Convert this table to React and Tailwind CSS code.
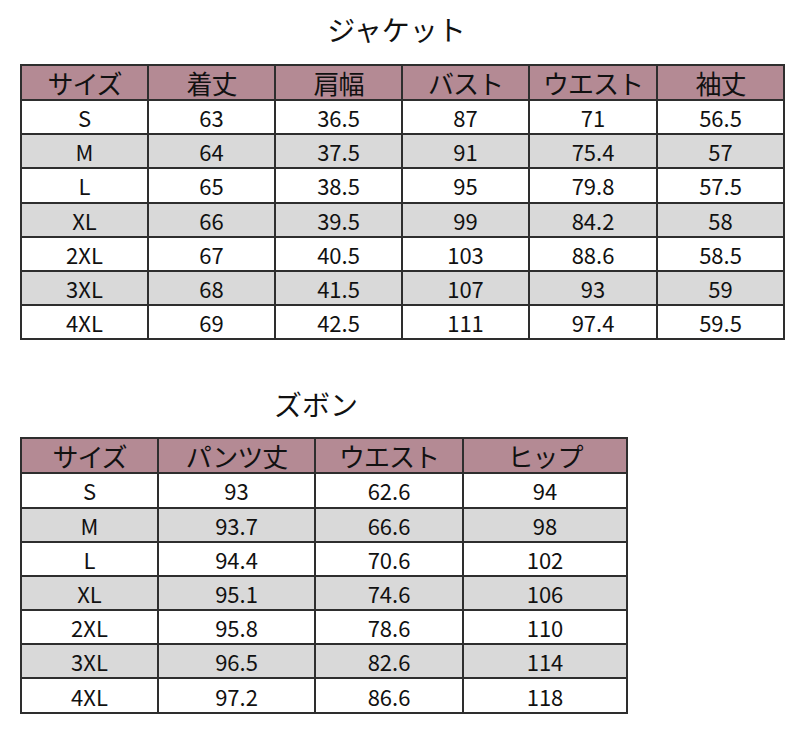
import React from 'react';

// サイズ表 — ジャケット / ズボン
const jacketHead = ['サイズ', '着丈', '肩幅', 'バスト', 'ウエスト', '袖丈'];
const jacketRows = [
  ['S', '63', '36.5', '87', '71', '56.5'],
  ['M', '64', '37.5', '91', '75.4', '57'],
  ['L', '65', '38.5', '95', '79.8', '57.5'],
  ['XL', '66', '39.5', '99', '84.2', '58'],
  ['2XL', '67', '40.5', '103', '88.6', '58.5'],
  ['3XL', '68', '41.5', '107', '93', '59'],
  ['4XL', '69', '42.5', '111', '97.4', '59.5'],
];

const pantsHead = ['サイズ', 'パンツ丈', 'ウエスト', 'ヒップ'];
const pantsRows = [
  ['S', '93', '62.6', '94'],
  ['M', '93.7', '66.6', '98'],
  ['L', '94.4', '70.6', '102'],
  ['XL', '95.1', '74.6', '106'],
  ['2XL', '95.8', '78.6', '110'],
  ['3XL', '96.5', '82.6', '114'],
  ['4XL', '97.2', '86.6', '118'],
];

function SizeTable({ head, rows, widths }) {
  return (
    <table className="table-fixed border-collapse border-2 border-[#2e2e2e]">
      <colgroup>
        {widths.map((w, i) => <col key={i} style={{ width: w }} />)}
      </colgroup>
      <thead>
        <tr className="h-[35px] bg-[#b48a94]">
          {head.map((h) => (
            <th key={h} className="border-2 border-[#2e2e2e] p-0 text-[26px] font-normal leading-none tracking-[-1px] text-[#111]">
              {h}
            </th>
          ))}
        </tr>
      </thead>
      <tbody>
        {rows.map((r, i) => (
          <tr key={r[0]} className={`h-[34.2px] ${i % 2 ? 'bg-[#d9d9d9]' : 'bg-white'}`}>
            {r.map((c, j) => (
              <td key={j} className="border-2 border-[#2e2e2e] p-0 text-center text-[22px] leading-none text-[#111]">
                {c}
              </td>
            ))}
          </tr>
        ))}
      </tbody>
    </table>
  );
}

export default function App() {
  return (
    <div
      className="w-[800px] h-[734px] bg-white pt-[13px] pl-[20px]"
      style={{ fontFamily: '"Noto Sans CJK JP", "Noto Sans", sans-serif' }}
    >
      <div className="w-[763px] h-[32px] leading-[32px] text-center text-[28px] text-[#111] pr-[10px]">ジャケット</div>
      <div className="mt-[19px]">
        <SizeTable head={jacketHead} rows={jacketRows} widths={[127, 127, 127, 127, 128, 127]} />
      </div>

      <div className="mt-[48px] w-[606px] h-[32px] leading-[32px] text-center text-[28px] text-[#111] pr-[14px]">ズボン</div>
      <div className="mt-[17px]">
        <SizeTable head={pantsHead} rows={pantsRows} widths={[137, 157, 148, 164]} />
      </div>
    </div>
  );
}
